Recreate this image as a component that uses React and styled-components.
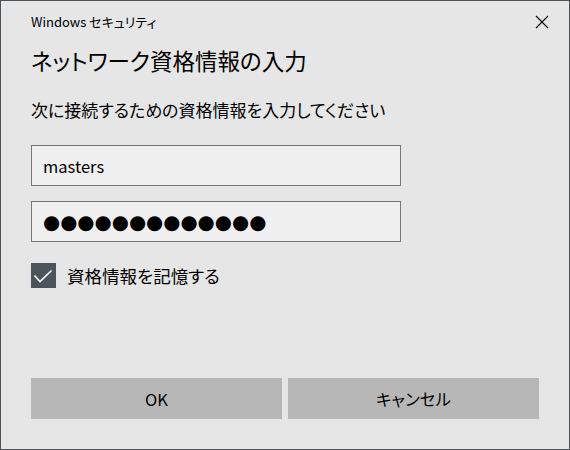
import React from 'react';
import styled, { createGlobalStyle } from 'styled-components';

const GlobalStyle = createGlobalStyle`
    html, body {
        margin: 0;
        padding: 0;
        background: #e6e6e6;
    }
    body {
        font-family: "Noto Sans CJK JP", "Noto Sans", sans-serif;
        color: #000;
    }
`;

const Window = styled.div`
    box-sizing: border-box;
    width: 570px;
    height: 450px;
    border: 1px solid #4b5258;
    background-color: #e6e6e6;
    display: flex;
    flex-direction: column;
    font-feature-settings: "palt";
`;

const TitleBar = styled.div`
    height: 40px;
    display: flex;
    align-items: center;
    justify-content: space-between;
    padding: 0 20px 0 30px;
`;

const TitleText = styled.div`
    font-size: 13px;
    line-height: 16px;
    padding-top: 1px;
`;

const CloseButton = styled.button`
    width: 15px;
    height: 15px;
    padding: 0;
    border: none;
    background: transparent;
    display: flex;
    align-items: center;
    justify-content: center;
    margin-top: 2px;
`;

const Content = styled.div`
    flex: 1;
    display: flex;
    flex-direction: column;
    padding: 0 30px 30px 30px;
`;

const Heading = styled.h1`
    margin: 4px 0 0 0;
    font-size: 22.5px;
    font-weight: normal;
    line-height: 30px;
`;

const Prompt = styled.p`
    margin: 24px 0 0 0;
    font-size: 17px;
    line-height: 22px;
`;

const Field = styled.div`
    box-sizing: border-box;
    width: 370px;
    height: 41px;
    margin-top: ${ props => props.gap }px;
    border: 1px solid #767676;
    background-color: #f0f0f0;
    display: flex;
    align-items: center;
    padding-left: 11px;
    font-size: 16.5px;
`;

const Mask = styled.span`
    font-family: "DejaVu Sans", sans-serif;
    font-size: 19.7px;
    line-height: 1;
    padding-top: 3px;
`;

const CheckRow = styled.label`
    display: flex;
    align-items: center;
    gap: 11px;
    margin-top: 21px;
    font-size: 17.5px;
`;

const CheckBox = styled.span`
    width: 25px;
    height: 25px;
    background-color: #4c545b;
    display: flex;
    align-items: center;
    justify-content: center;
`;

const Spacer = styled.div`
    flex: 1;
`;

const ButtonRow = styled.div`
    display: grid;
    grid-template-columns: 1fr 1fr;
    gap: 6px;
`;

const Button = styled.button`
    height: 41px;
    border: none;
    background-color: #b7b7b7;
    font-family: "Noto Sans CJK JP", "Noto Sans", sans-serif;
    font-feature-settings: "palt";
    font-size: 16.5px;
    color: #000;
    padding: 0;
`;

const App = () => {
    return (
        <>
            <GlobalStyle />
            <Window>
                <TitleBar>
                    <TitleText>Windows セキュリティ</TitleText>
                    <CloseButton aria-label="閉じる">
                        <svg width="14" height="14" viewBox="0 0 14 14">
                            <path d="M1 1 L13 13 M13 1 L1 13" stroke="#000" strokeWidth="1.1" fill="none" />
                        </svg>
                    </CloseButton>
                </TitleBar>
                <Content>
                    <Heading>ネットワーク資格情報の入力</Heading>
                    <Prompt>次に接続するための資格情報を入力してください</Prompt>
                    <Field gap={ 24 }>masters</Field>
                    <Field gap={ 15 }>
                        <Mask>●●●●●●●●●●●●●</Mask>
                    </Field>
                    <CheckRow>
                        <CheckBox>
                            <svg width="25" height="25" viewBox="0 0 25 25">
                                <path d="M3.5 12.5 L9 18.5 L20.5 7.5" stroke="#fff" strokeWidth="1.6" fill="none" />
                            </svg>
                        </CheckBox>
                        資格情報を記憶する
                    </CheckRow>
                    <Spacer />
                    <ButtonRow>
                        <Button>OK</Button>
                        <Button>キャンセル</Button>
                    </ButtonRow>
                </Content>
            </Window>
        </>
    );
};

export default App;
